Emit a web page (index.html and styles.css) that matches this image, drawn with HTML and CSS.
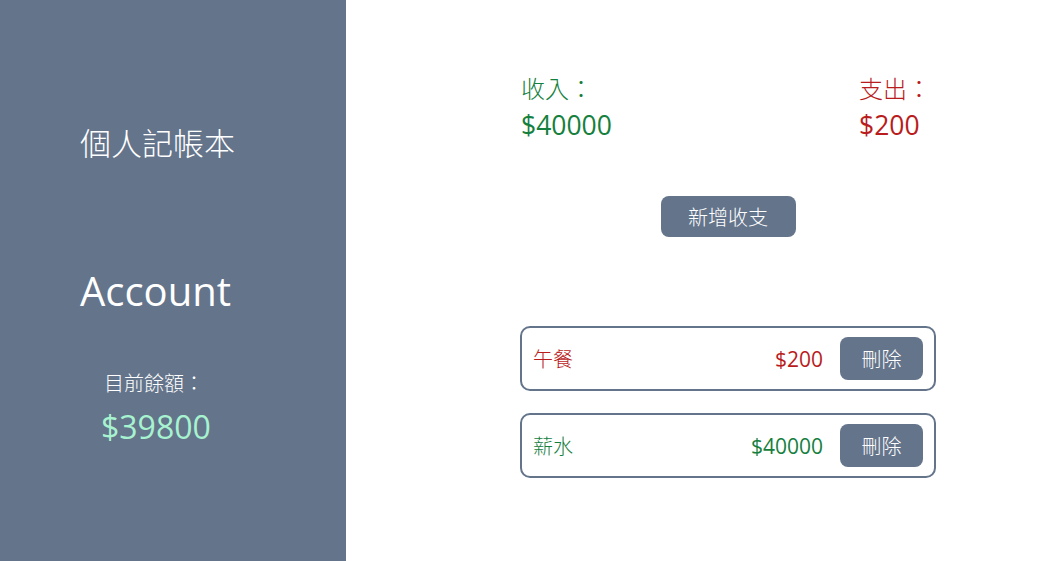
FILE: index.html
```html
<!DOCTYPE html>
<html lang="zh-Hant">
<head>
<meta charset="utf-8">
<title>個人記帳本</title>
<link rel="stylesheet" href="styles.css">
</head>
<body>
<div class="app">
  <aside class="sidebar">
    <h1 class="title cjk">個人記帳本</h1>
    <h2 class="account">Account</h2>
    <div class="balance">
      <div class="balance-label cjk">目前餘額：</div>
      <div class="balance-value">$39800</div>
    </div>
  </aside>
  <main class="main">
    <div class="content">
      <div class="summary">
        <div class="stat income">
          <div class="stat-label cjk">收入：</div>
          <div class="stat-value">$40000</div>
        </div>
        <div class="stat expense">
          <div class="stat-label cjk">支出：</div>
          <div class="stat-value">$200</div>
        </div>
      </div>
      <button class="add-btn cjk">新增收支</button>
      <ul class="list">
        <li class="item expense">
          <span class="item-name cjk">午餐</span>
          <span class="item-amount">$200</span>
          <button class="del-btn cjk">刪除</button>
        </li>
        <li class="item income">
          <span class="item-name cjk">薪水</span>
          <span class="item-amount">$40000</span>
          <button class="del-btn cjk">刪除</button>
        </li>
      </ul>
    </div>
  </main>
</div>
</body>
</html>
```
FILE: styles.css
```css
* { box-sizing: border-box; }
html, body { margin: 0; padding: 0; height: 100%; }
body {
  font-family: "Open Sans", "Noto Sans CJK TC", sans-serif;
  background: #fff;
}
.cjk {
  font-family: "Noto Sans CJK TC", sans-serif;
  font-weight: 300;
}
.app { display: flex; height: 561px; }
.sidebar {
  width: 346px;
  flex: none;
  background: #64748b;
  color: #fff;
  padding: 120px 0 0 80px;
}
.title {
  margin: 0;
  font-size: 31px;
  line-height: 44px;
}
.account {
  margin: 100px 0 0;
  font-size: 40px;
  font-weight: 400;
  line-height: 54px;
}
.balance { margin: 50px 0 0 24px; }
.balance-label { font-size: 20px; line-height: 30px; }
.balance-value {
  margin: 9px 0 0 -3px;
  font-size: 32px;
  line-height: 40px;
  color: #a7f3d0;
}
.main {
  flex: 1;
  padding-left: 71px;
  display: flex;
  justify-content: center;
}
.content {
  width: 416px;
  display: flex;
  flex-direction: column;
  align-items: center;
  padding-top: 70px;
}
.summary {
  width: 100%;
  display: flex;
  justify-content: space-between;
  padding-left: 1px;
  padding-right: 2px;
}
.stat-label { font-size: 24px; line-height: 36px; }
.stat-value { font-size: 26.5px; line-height: 36px; margin-top: 1px; }
.income { color: #15803d; }
.expense { color: #b91c1c; }
.stat.expense { width: 75px; }
.add-btn {
  margin-top: 53px;
  width: 135px;
  height: 41px;
  border: none;
  border-radius: 8px;
  background: #64748b;
  color: #fff;
  font-size: 20px;
  padding: 0;
}
.list {
  list-style: none;
  margin: 89px 0 0;
  padding: 0;
  width: 100%;
  display: flex;
  flex-direction: column;
  gap: 22px;
}
.item {
  height: 65px;
  border: 2px solid #64748b;
  border-radius: 10px;
  display: flex;
  align-items: center;
  padding: 0 11px;
  font-size: 21px;
}
.item-name { flex: 1; font-size: 20px; }
.item-amount { margin-right: 17px; }
.del-btn {
  width: 83px;
  height: 43px;
  border: none;
  border-radius: 8px;
  background: #64748b;
  color: #fff;
  font-size: 20px;
  padding: 0;
}
```
